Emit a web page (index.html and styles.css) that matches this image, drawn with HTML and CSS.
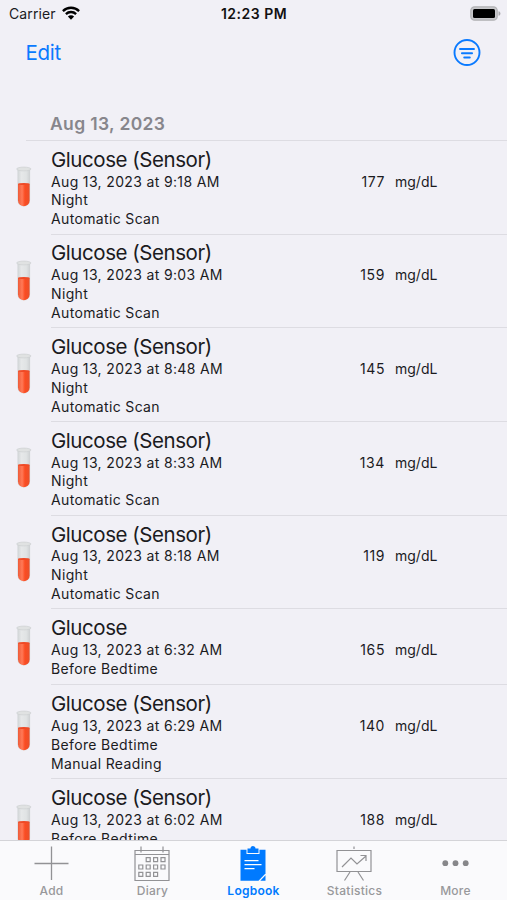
FILE: index.html
```html
<!DOCTYPE html>
<html lang="en">
<head>
<meta charset="utf-8">
<title>Logbook</title>
<link rel="stylesheet" href="styles.css">
</head>
<body>
<svg class="defs" aria-hidden="true">
  <defs>
    <linearGradient id="glass" x1="0" x2="1" y1="0" y2="0">
      <stop offset="0" stop-color="#cfd3d5"/><stop offset=".3" stop-color="#e6e8e9"/><stop offset=".7" stop-color="#e0e3e4"/><stop offset="1" stop-color="#cdd0d2"/>
    </linearGradient>
    <linearGradient id="fluid" x1="0" x2="1" y1="0" y2="0">
      <stop offset="0" stop-color="#ee5a38"/><stop offset=".35" stop-color="#ff7a58"/><stop offset=".6" stop-color="#fb4c22"/><stop offset="1" stop-color="#e8502c"/>
    </linearGradient>
  </defs>
  <symbol id="tube" viewBox="0 0 16 42">
    <path d="M1.500 3V34a6.300 6.800 0 0 0 12.600 0V3Z" fill="url(#glass)"/>
    <path d="M2 18V34.500a5.800 5.800 0 0 0 11.600 0V18Z" fill="url(#fluid)"/>
    <ellipse cx="7.800" cy="18" rx="5.800" ry="1" fill="#ef4a26"/>
    <ellipse cx="7.800" cy="3" rx="7.200" ry="1.900" fill="#e0e2e2" stroke="#cdd0d1" stroke-width=".7"/>
  </symbol>
</svg>
<div class="app">
  <header class="status">
    <div class="carrier">Carrier
      <svg class="wifi" viewBox="0 0 18 14" fill="none" stroke="#000" stroke-width="2.300">
        <path d="M.9 5.100a11.500 11.500 0 0 1 16.200 0M3.900 8.100a7.200 7.200 0 0 1 10.200 0"/>
        <path d="M9 13.700 5.900 10.500a4.400 4.400 0 0 1 6.200 0Z" fill="#000" stroke="none"/>
      </svg>
    </div>
    <div class="clock">12:23 PM</div>
    <svg class="battery" viewBox="0 0 31 15">
      <rect x=".8" y=".8" width="26.400" height="13.400" rx="3.800" fill="#c8c8cb" stroke="#b2b2b5" stroke-width="1.200"/>
      <rect x="3" y="3" width="22" height="9" rx="1.500"/>
      <path d="M28.500 5.200c2.600.6 2.600 4 0 4.600Z" fill="#aaaaad"/>
    </svg>
  </header>
  <nav class="navbar">
    <span class="edit">Edit</span>
    <svg class="filter" viewBox="0 0 28 28" fill="none" stroke="#0a7aff" stroke-width="1.900" stroke-linecap="round">
      <circle cx="14" cy="13.500" r="12.500"/><path d="M7 10h14M8.900 14.300h10.200M11.200 18.500h5.600"/>
    </svg>
  </nav>
  <h2 class="date">Aug 13, 2023</h2>
  <main class="list" id="list"></main>
  <footer class="tabs">
    <div class="tab"><svg viewBox="0 0 36 36" fill="none" stroke="#929295" stroke-width="1.300"><path d="M18.500 .5v33.500M1.500 17.500h34"/></svg><span class="label">Add</span></div>
    <div class="tab"><svg viewBox="0 0 36 36" fill="none" stroke="#929295" stroke-width="1.200">
      <path d="M1 4.500h34v30H1ZM1 8.500h34M7 .5v6M29 .5v6"/>
      <path d="M12.200 11.700h4v4h-4zM19.600 11.700h4v4h-4zM27 11.700h4v4h-4zM4.800 19h4v4h-4zM12.200 19h4v4h-4zM19.600 19h4v4h-4zM27 19h4v4h-4zM4.800 26.400h4v4h-4zM12.200 26.400h4v4h-4zM19.600 26.400h4v4h-4z"/></svg><span class="label">Diary</span></div>
    <div class="tab active"><svg viewBox="0 0 36 36">
      <path d="M5.500 3.800h25V27.500l-7 7.200h-18Z" fill="#007aff"/><path d="M30.500 29.300v5.400h-5.200Z" fill="#007aff"/>
      <path d="M12.500 2.500h3a2.500 2.500 0 0 1 5 0h3V7h-11Z" fill="#007aff" stroke="#fafafc" stroke-width="2" paint-order="stroke"/>
      <path d="M9.500 14.700h14M9.500 18.700h17M9.500 22.700h10" stroke="#fff" stroke-width="1.200"/></svg><span class="label">Logbook</span></div>
    <div class="tab"><svg viewBox="0 0 36 36" fill="none" stroke="#929295" stroke-width="1.200">
      <path d="M1 4.500h34v21H1ZM18 .5v2.500M14 26l-5.500 8.500M22 26l5.500 8.500M6 21l9-9 6 6 9-8M24.500 9.500H30V15"/></svg><span class="label">Statistics</span></div>
    <div class="tab"><svg viewBox="0 0 36 36" fill="#87878a"><circle cx="8.300" cy="17.200" r="2.900"/><circle cx="18.500" cy="17.200" r="2.900"/><circle cx="28.700" cy="17.200" r="2.900"/></svg><span class="label">More</span></div>
  </footer>
</div>
<script src="script.js"></script>
</body>
</html>
```
FILE: styles.css
```css
* { box-sizing: border-box; }
body { margin: 0; background: #f1f0f6; font-family: Inter, "Liberation Sans", sans-serif; color: #1b1b1e; }
.defs { position: absolute; width: 0; height: 0; }
.app { width: 507px; height: 900px; display: flex; flex-direction: column; overflow: hidden; }
.status { height: 27px; flex: none; display: grid; grid-template-columns: 1fr auto 1fr; align-items: center; padding: 0 6px 0 9px; font-size: 14px; }
.carrier { display: flex; align-items: center; gap: 6px; letter-spacing: 0.1px; }
.wifi { width: 18px; height: 14px; margin-top: -2px; }
.clock { font-weight: 600; letter-spacing: 0.5px; color: #111; margin-left: -2px; }
.battery { width: 31px; height: 15px; justify-self: end; }
.navbar { height: 51px; flex: none; display: flex; justify-content: space-between; align-items: center; padding: 0 26px; }
.edit { color: #0a7aff; font-size: 20.5px; letter-spacing: -0.3px; margin: -1px 0 0 -0.5px; }
.filter { width: 28px; height: 28px; }
.date { margin: 0 0 0 26px; padding: 26px 0 0 24px; height: 62px; flex: none; font-size: 17.5px; line-height: 39px; font-weight: 600; letter-spacing: 0.35px; color: #87868c; }
.list { flex: 1; min-height: 0; overflow: hidden; }
.row { display: flex; height: 93.7px; }
.row.short { height: 76px; }
.tube { width: 16px; height: 42px; margin: 26px 19px 0 16px; flex: none; }
.row.short .tube { margin-top: 17px; }
.content { flex: 1; border-top: 1px solid #dddce2; padding-top: 5.8px; display: grid; grid-template-columns: 260px 74px 1fr; grid-template-rows: 25.8px auto; align-content: start; }
.row:first-child { background: linear-gradient(#dddce2, #dddce2) 26px 0 / 100% 1px no-repeat; }
.title { grid-column: 1 / -1; height: 25px; line-height: 25px; font-size: 20.5px; letter-spacing: -0.45px; }
.details, .value, .unit { font-size: 14px; line-height: 18.8px; }
.details { letter-spacing: 0.35px; }
.value { text-align: right; letter-spacing: 0.6px; }
.unit { padding-left: 10px; }
.tabs { height: 60px; flex: none; display: grid; grid-template-columns: repeat(5, 101px); justify-content: center; background: #fafafc; border-top: 1px solid #d4d4d8; }
.tab { display: flex; flex-direction: column; align-items: center; padding-top: 5px; color: #98989b; }
.tab svg { width: 36px; height: 36px; flex: none; margin-left: -1px; }
.label { font-size: 12px; line-height: 16px; margin-top: 1px; font-weight: 500; letter-spacing: 0.25px; }
.active { color: #007aff; }
.active .label { font-weight: 600; }
```
FILE: script.js
```js
const entries = [
  ["Glucose (Sensor)", "9:18", 177, ["Night", "Automatic Scan"]],
  ["Glucose (Sensor)", "9:03", 159, ["Night", "Automatic Scan"]],
  ["Glucose (Sensor)", "8:48", 145, ["Night", "Automatic Scan"]],
  ["Glucose (Sensor)", "8:33", 134, ["Night", "Automatic Scan"]],
  ["Glucose (Sensor)", "8:18", 119, ["Night", "Automatic Scan"]],
  ["Glucose", "6:32", 165, ["Before Bedtime"]],
  ["Glucose (Sensor)", "6:29", 140, ["Before Bedtime", "Manual Reading"]],
  ["Glucose (Sensor)", "6:02", 188, ["Before Bedtime"], true]
];
document.getElementById("list").innerHTML = entries.map(([title, time, value, notes, tall]) => `
  <section class="row${notes.length === 1 && !tall ? " short" : ""}">
    <svg class="tube"><use href="#tube"/></svg>
    <div class="content">
      <div class="title">${title}</div>
      <div class="details">Aug 13, 2023 at ${time} AM<br>${notes.join("<br>")}</div>
      <div class="value">${value}</div>
      <div class="unit">mg/dL</div>
    </div>
  </section>`).join("");
```
